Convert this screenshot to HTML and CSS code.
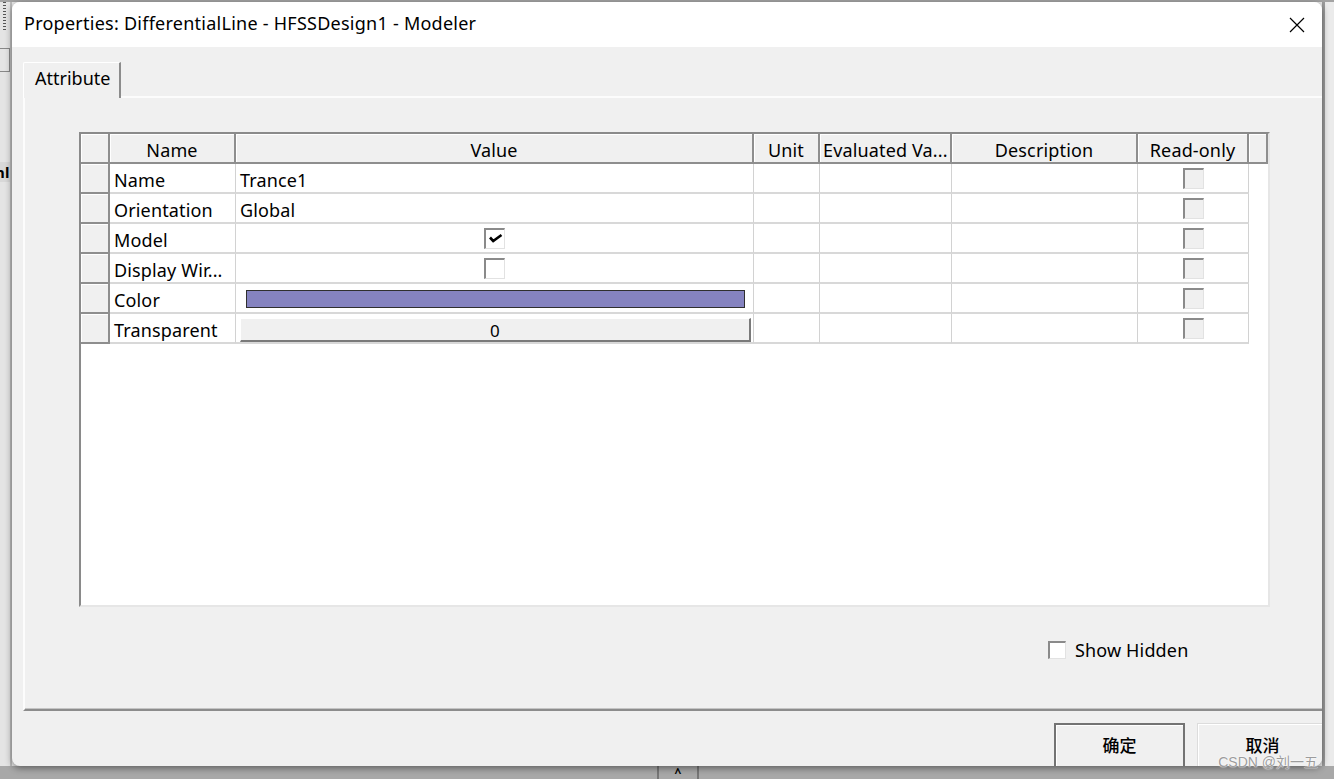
FILE: index.html
```html
<!DOCTYPE html>
<html lang="en">
<head>
    <meta charset="UTF-8">
    <title>Properties: DifferentialLine - HFSSDesign1 - Modeler</title>
    <link rel="stylesheet" href="styles.css">
</head>
<body>
    <!-- application behind the dialog -->
    <div class="desktop">
        <div class="desk-top"></div>
        <div class="desk-main">
            <div class="desk-left">
                <div class="grip"></div>
                <div class="left-box"></div>
                <div class="left-label">nl</div>
            </div>
            <div class="desk-canvas"></div>
            <div class="desk-right"></div>
        </div>
        <div class="desk-status">
            <div class="status-btn">&#94;</div>
        </div>
    </div>

    <div class="dialog">
        <div class="titlebar">
            <span class="title">Properties: DifferentialLine - HFSSDesign1 - Modeler</span>
            <button class="close-button">
                <svg width="16" height="16" viewBox="0 0 16 16">
                    <path d="M1 1 L15 15 M15 1 L1 15" stroke="#000" stroke-width="1.2" fill="none"/>
                </svg>
            </button>
        </div>

        <div class="dialog-body">
            <div class="tabs">
                <div class="tab">Attribute</div>
                <div class="tab-rest"></div>
            </div>

            <div class="panel">
                <div class="grid">
                    <div class="grid-row head">
                        <div class="hc"></div>
                        <div class="hc">Name</div>
                        <div class="hc">Value</div>
                        <div class="hc">Unit</div>
                        <div class="hc left">Evaluated Va...</div>
                        <div class="hc">Description</div>
                        <div class="hc">Read-only</div>
                        <div class="hc"></div>
                    </div>
                    <div class="grid-row">
                        <div class="rh"></div>
                        <div class="dc">Name</div>
                        <div class="dc">Trance1</div>
                        <div class="dc"></div>
                        <div class="dc"></div>
                        <div class="dc"></div>
                        <div class="dc center"><span class="cb disabled"></span></div>
                    </div>
                    <div class="grid-row">
                        <div class="rh"></div>
                        <div class="dc">Orientation</div>
                        <div class="dc">Global</div>
                        <div class="dc"></div>
                        <div class="dc"></div>
                        <div class="dc"></div>
                        <div class="dc center"><span class="cb disabled"></span></div>
                    </div>
                    <div class="grid-row">
                        <div class="rh"></div>
                        <div class="dc">Model</div>
                        <div class="dc center">
                            <span class="cb">
                                <svg width="19" height="19" viewBox="0 0 19 19">
                                    <path d="M4 7.5 L7.2 11 L15.5 5" stroke="#000" stroke-width="2.6" fill="none"/>
                                </svg>
                            </span>
                        </div>
                        <div class="dc"></div>
                        <div class="dc"></div>
                        <div class="dc"></div>
                        <div class="dc center"><span class="cb disabled"></span></div>
                    </div>
                    <div class="grid-row">
                        <div class="rh"></div>
                        <div class="dc">Display Wir...</div>
                        <div class="dc center"><span class="cb"></span></div>
                        <div class="dc"></div>
                        <div class="dc"></div>
                        <div class="dc"></div>
                        <div class="dc center"><span class="cb disabled"></span></div>
                    </div>
                    <div class="grid-row">
                        <div class="rh"></div>
                        <div class="dc">Color</div>
                        <div class="dc color-cell"><div class="color-bar"></div></div>
                        <div class="dc"></div>
                        <div class="dc"></div>
                        <div class="dc"></div>
                        <div class="dc center"><span class="cb disabled"></span></div>
                    </div>
                    <div class="grid-row">
                        <div class="rh"></div>
                        <div class="dc">Transparent</div>
                        <div class="dc button-cell"><div class="value-button">0</div></div>
                        <div class="dc"></div>
                        <div class="dc"></div>
                        <div class="dc"></div>
                        <div class="dc center"><span class="cb disabled"></span></div>
                    </div>
                </div>

                <label class="show-hidden">
                    <span class="cb small"></span>
                    Show Hidden
                </label>
            </div>

            <div class="footer">
                <button class="btn default">确定</button>
                <button class="btn">取消</button>
            </div>
        </div>
    </div>

    <div class="watermark">CSDN @刘一五</div>
</body>
</html>
```

FILE: styles.css
```css
* {
    margin: 0;
    padding: 0;
    box-sizing: border-box;
}

body {
    width: 1334px;
    height: 779px;
    overflow: hidden;
    position: relative;
    font-family: "Noto Sans", "Noto Sans CJK SC", sans-serif;
    font-size: 18px;
    letter-spacing: 0.15px;
    color: #000;
    background: #e9e9e9;
}

/* background application */
.desktop {
    height: 779px;
    display: flex;
    flex-direction: column;
}

.desk-top {
    height: 2px;
    background: #a3a3a3;
}

.desk-main {
    flex: 1;
    display: flex;
}

.desk-left {
    width: 12px;
    background: #e4e4e4;
    border-right: 2px solid #bdbdbd;
    display: flex;
    flex-direction: column;
}

.grip {
    height: 28px;
    margin: 0 4px 0 3px;
    background: repeating-linear-gradient(#555 0 1px, transparent 1px 3px);
}

.left-box {
    height: 24px;
    margin-top: 18px;
    border: 1px solid #888;
    border-left: none;
}

.left-label {
    margin-top: 90px;
    font-weight: 700;
    font-size: 15px;
    margin-left: -5px;
    background: #d8d8d8;
}

.desk-canvas {
    flex: 1;
}

.desk-right {
    width: 12px;
    border-left: 3px solid #9c9c9c;
    background: #ebebeb;
}

.desk-status {
    height: 13px;
    background: #a8a8a8;
    display: flex;
    padding-left: 657px;
}

.status-btn {
    width: 42px;
    border-left: 2px solid #777;
    border-right: 2px solid #777;
    text-align: center;
    font-size: 12px;
    line-height: 14px;
    font-weight: 700;
}

/* dialog window */
.dialog {
    position: absolute;
    left: 12px;
    top: 2px;
    width: 1310px;
    height: 764px;
    background: #f0f0f0;
    border-radius: 8px;
    overflow: hidden;
    box-shadow: 0 2px 7px rgba(0, 0, 0, 0.45);
    display: flex;
    flex-direction: column;
}

.titlebar {
    height: 45px;
    background: #fff;
    display: flex;
    align-items: center;
    justify-content: space-between;
    padding-left: 12px;
}

.title {
    font-size: 18px;
    letter-spacing: 0.25px;
    padding-bottom: 4px;
}

.close-button {
    width: 46px;
    height: 45px;
    margin-right: 2px;
    border: none;
    background: none;
    display: flex;
    align-items: center;
    justify-content: center;
}

.dialog-body {
    flex: 1;
    padding: 15px 0 0 11px;
    display: flex;
    flex-direction: column;
}

.tabs {
    display: flex;
    height: 36px;
}

.tab {
    width: 98px;
    border-left: 1px solid #fff;
    border-top: 1px solid #fff;
    border-right: 2px solid #8c8c8c;
    border-top-left-radius: 2px;
    padding: 3px 0 0 11px;
    letter-spacing: 0;
}

.tab-rest {
    flex: 1;
    border-bottom: 2px solid #fcfcfc;
}

.panel {
    height: 613px;
    border-left: 2px solid #fcfcfc;
    border-bottom: 2px solid #8c8c8c;
    box-shadow: 0 -1px 0 #c4c4c4 inset;
    padding: 34px 0 0 54px;
    display: flex;
    flex-direction: column;
}

/* property grid */
.grid {
    width: 1191px;
    height: 475px;
    background: #fff;
    border-left: 2px solid #8a8a8a;
    border-top: 2px solid #8a8a8a;
    border-right: 2px solid #e6e6e6;
    border-bottom: 2px solid #e6e6e6;
}

.grid-row {
    display: grid;
    grid-template-columns: 29px 126px 518px 66px 132px 186px 111px 19px;
    height: 30px;
}

.hc {
    background: #f0f0f0;
    border-right: 2px solid #8e8e8e;
    border-bottom: 2px solid #8e8e8e;
    box-shadow: inset 1px 1px 0 #fff;
    text-align: center;
    line-height: 32px;
    white-space: nowrap;
    overflow: hidden;
}

.hc.left {
    text-align: left;
    padding-left: 3px;
}

.rh {
    background: #f0f0f0;
    border-right: 2px solid #8e8e8e;
    border-bottom: 2px solid #8e8e8e;
    box-shadow: inset 1px 1px 0 #fff;
}

.dc {
    border-right: 1px solid #d2d2d2;
    border-bottom: 2px solid #d8d8d8;
    padding-left: 4px;
    line-height: 32px;
    white-space: nowrap;
    overflow: hidden;
}

.dc.center {
    display: flex;
    justify-content: center;
    align-items: center;
    padding-left: 0;
}

.cb {
    display: block;
    width: 21px;
    height: 21px;
    background: #fff;
    border-top: 2px solid #8a8a8a;
    border-left: 2px solid #8a8a8a;
    border-right: 1px solid #e2e2e2;
    border-bottom: 1px solid #e2e2e2;
}

.cb svg {
    display: block;
}

.cb.disabled {
    background: #f0f0f0;
}

.cb.small {
    width: 18px;
    height: 18px;
}

.color-cell {
    padding: 6px 8px 0 10px;
}

.color-bar {
    height: 18px;
    background: #8583c0;
    border: 1px solid #2f2f2f;
}

.button-cell {
    padding: 4px 2px 0 4px;
}

.value-button {
    height: 24px;
    background: #f0f0f0;
    border-top: 1px solid #fff;
    border-left: 1px solid #fff;
    border-right: 2px solid #7a7a7a;
    border-bottom: 2px solid #7a7a7a;
    text-align: center;
    line-height: 23px;
    font-size: 17px;
}

.show-hidden {
    display: flex;
    align-items: center;
    gap: 9px;
    margin: 33px 0 0 969px;
    line-height: 20px;
}

/* footer buttons */
.footer {
    flex: 1;
    display: flex;
    justify-content: flex-end;
    gap: 12px;
    padding-top: 12px;
    margin-right: -6px;
}

.btn {
    width: 131px;
    height: 52px;
    background: #f0f0f0;
    border: 1px solid #dcdcdc;
    box-shadow: inset 1px 1px 0 #fff;
    font-family: "Noto Sans CJK SC", sans-serif;
    font-size: 17px;
    font-weight: 500;
    padding-bottom: 10px;
}

.btn.default {
    border: 2px solid #737373;
}

.watermark {
    position: absolute;
    right: 16px;
    bottom: 8px;
    font-family: "Liberation Sans", "Noto Sans CJK SC", sans-serif;
    font-size: 14px;
    letter-spacing: 0;
    color: #9c9c9c;
    text-shadow: 0 0 2px #fff, 0 0 1px #fff;
}
```
